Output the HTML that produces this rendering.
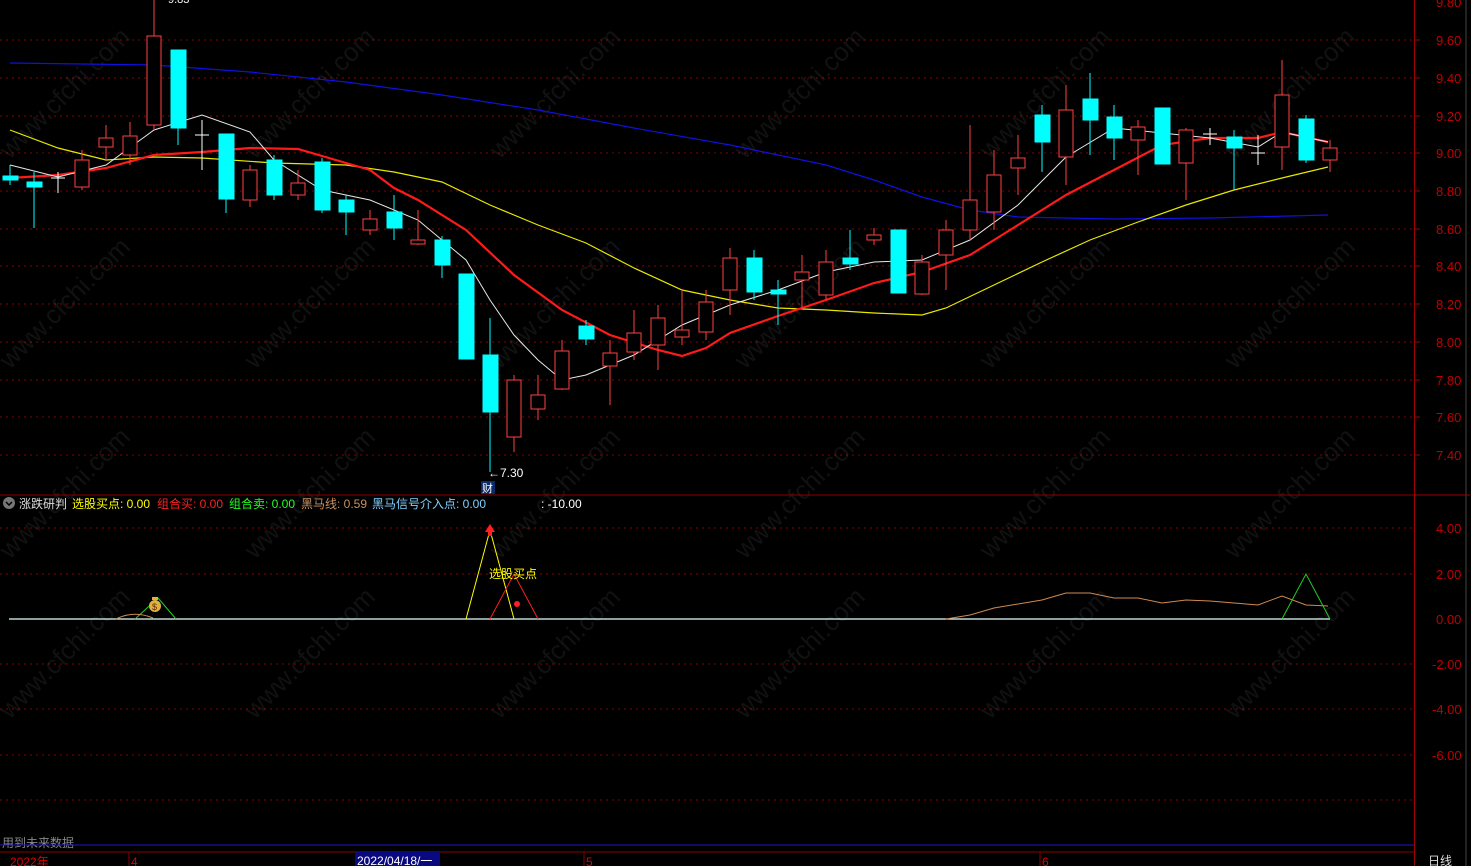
<!DOCTYPE html>
<html><head><meta charset="utf-8"><style>
html,body{margin:0;padding:0;background:#000;width:1471px;height:866px;overflow:hidden}
svg{display:block}
text{font-family:"Liberation Sans","Noto Sans CJK SC",sans-serif}
</style></head><body>
<svg width="1471" height="866" viewBox="0 0 1471 866" xmlns="http://www.w3.org/2000/svg">
<rect width="1471" height="866" fill="#000"/>
<g stroke="#8a0000" stroke-width="1" stroke-dasharray="2,4">
<line x1="0" x2="1414" y1="40" y2="40"/><line x1="0" x2="1414" y1="78" y2="78"/><line x1="0" x2="1414" y1="116" y2="116"/><line x1="0" x2="1414" y1="153" y2="153"/><line x1="0" x2="1414" y1="191" y2="191"/><line x1="0" x2="1414" y1="229" y2="229"/><line x1="0" x2="1414" y1="266" y2="266"/><line x1="0" x2="1414" y1="304" y2="304"/><line x1="0" x2="1414" y1="342" y2="342"/><line x1="0" x2="1414" y1="380" y2="380"/><line x1="0" x2="1414" y1="417" y2="417"/><line x1="0" x2="1414" y1="455" y2="455"/>
<line x1="0" x2="1414" y1="528" y2="528"/><line x1="0" x2="1414" y1="574" y2="574"/><line x1="0" x2="1414" y1="664" y2="664"/><line x1="0" x2="1414" y1="709" y2="709"/><line x1="0" x2="1414" y1="755" y2="755"/><line x1="0" x2="1414" y1="800" y2="800"/>
</g>
<g fill="#7a7a7a" opacity="0.14" font-size="26">
<text transform="translate(10,160) rotate(-45)">www.cfchi.com</text>
<text transform="translate(255,160) rotate(-45)">www.cfchi.com</text>
<text transform="translate(500,160) rotate(-45)">www.cfchi.com</text>
<text transform="translate(745,160) rotate(-45)">www.cfchi.com</text>
<text transform="translate(990,160) rotate(-45)">www.cfchi.com</text>
<text transform="translate(1235,160) rotate(-45)">www.cfchi.com</text>
<text transform="translate(10,370) rotate(-45)">www.cfchi.com</text>
<text transform="translate(255,370) rotate(-45)">www.cfchi.com</text>
<text transform="translate(500,370) rotate(-45)">www.cfchi.com</text>
<text transform="translate(745,370) rotate(-45)">www.cfchi.com</text>
<text transform="translate(990,370) rotate(-45)">www.cfchi.com</text>
<text transform="translate(1235,370) rotate(-45)">www.cfchi.com</text>
<text transform="translate(10,560) rotate(-45)">www.cfchi.com</text>
<text transform="translate(255,560) rotate(-45)">www.cfchi.com</text>
<text transform="translate(500,560) rotate(-45)">www.cfchi.com</text>
<text transform="translate(745,560) rotate(-45)">www.cfchi.com</text>
<text transform="translate(990,560) rotate(-45)">www.cfchi.com</text>
<text transform="translate(1235,560) rotate(-45)">www.cfchi.com</text>
<text transform="translate(10,720) rotate(-45)">www.cfchi.com</text>
<text transform="translate(255,720) rotate(-45)">www.cfchi.com</text>
<text transform="translate(500,720) rotate(-45)">www.cfchi.com</text>
<text transform="translate(745,720) rotate(-45)">www.cfchi.com</text>
<text transform="translate(990,720) rotate(-45)">www.cfchi.com</text>
<text transform="translate(1235,720) rotate(-45)">www.cfchi.com</text>
</g>
<polyline fill="none" stroke="#1010e0" stroke-width="1.2" points="10,63 154,65 250,72 346,82 442,95 538,110 634,128 730,145 826,165 874,180 922,197 970,210 1018,217 1114,219 1210,218 1328,215"/>
<polyline fill="none" stroke="#e8e800" stroke-width="1.2" points="10,130 58,148 106,160 154,157 202,158 274,163 346,165 394,172 442,182 490,205 538,225 586,243 634,268 682,290 730,300 778,308 826,310 874,313 922,315 946,308 994,285 1042,262 1090,240 1138,222 1186,205 1234,190 1282,178 1328,167"/>
<polyline fill="none" stroke="#ff1a1a" stroke-width="2.2" points="10,178 58,175 106,168 154,155 202,152 250,148 298,149 346,163 370,170 394,188 418,200 466,230 514,275 562,310 610,335 658,350 682,356 706,348 730,333 778,316 826,300 874,283 922,272 970,255 1018,225 1066,195 1114,170 1162,145 1210,138 1258,138 1282,132 1328,142"/>
<polyline fill="none" stroke="#e8e8e8" stroke-width="1" points="10,165 58,177 106,165 154,130 202,115 250,132 274,160 322,190 370,200 418,220 466,260 490,300 514,335 538,360 562,380 586,375 634,355 682,325 730,305 778,290 826,272 874,262 922,260 970,240 1018,205 1066,157 1114,128 1162,133 1210,138 1258,147 1282,132 1328,142"/>
<g stroke-width="1">
<g stroke="#00ffff" fill="#00ffff">
<line x1="10" x2="10" y1="165" y2="185"/><rect x="3" y="176" width="15" height="4"/>
<line x1="34" x2="34" y1="172" y2="228"/><rect x="27" y="182" width="15" height="5"/>
<line x1="178" x2="178" y1="128" y2="145"/><rect x="171" y="50" width="15" height="78"/>
<line x1="226" x2="226" y1="134" y2="213"/><rect x="219" y="134" width="15" height="65"/>
<line x1="274" x2="274" y1="155" y2="200"/><rect x="267" y="160" width="15" height="35"/>
<line x1="322" x2="322" y1="158" y2="213"/><rect x="315" y="162" width="15" height="48"/>
<line x1="346" x2="346" y1="195" y2="235"/><rect x="339" y="200" width="15" height="12"/>
<line x1="394" x2="394" y1="195" y2="240"/><rect x="387" y="212" width="15" height="16"/>
<line x1="442" x2="442" y1="236" y2="278"/><rect x="435" y="240" width="15" height="25"/>
<rect x="459" y="274" width="15" height="85"/>
<line x1="490" x2="490" y1="318" y2="472"/><rect x="483" y="355" width="15" height="57"/>
<line x1="586" x2="586" y1="320" y2="345"/><rect x="579" y="326" width="15" height="13"/>
<line x1="754" x2="754" y1="250" y2="300"/><rect x="747" y="258" width="15" height="34"/>
<line x1="778" x2="778" y1="280" y2="325"/><rect x="771" y="290" width="15" height="4"/>
<line x1="850" x2="850" y1="230" y2="270"/><rect x="843" y="258" width="15" height="6"/>
<rect x="891" y="230" width="15" height="63"/>
<line x1="1042" x2="1042" y1="105" y2="172"/><rect x="1035" y="115" width="15" height="27"/>
<line x1="1090" x2="1090" y1="73" y2="155"/><rect x="1083" y="99" width="15" height="21"/>
<line x1="1114" x2="1114" y1="105" y2="160"/><rect x="1107" y="117" width="15" height="21"/>
<rect x="1155" y="108" width="15" height="56"/>
<line x1="1234" x2="1234" y1="130" y2="190"/><rect x="1227" y="137" width="15" height="11"/>
<line x1="1306" x2="1306" y1="115" y2="163"/><rect x="1299" y="119" width="15" height="41"/>
</g>
<g stroke="#ff4040" fill="#000">
<line x1="82" x2="82" y1="150" y2="190"/><rect x="75" y="160" width="14" height="27"/>
<line x1="106" x2="106" y1="125" y2="160"/><rect x="99" y="138" width="14" height="9"/>
<line x1="130" x2="130" y1="122" y2="165"/><rect x="123" y="136" width="14" height="19"/>
<line x1="154" x2="154" y1="0" y2="130"/><rect x="147" y="36" width="14" height="89"/>
<line x1="250" x2="250" y1="165" y2="207"/><rect x="243" y="170" width="14" height="30"/>
<line x1="298" x2="298" y1="170" y2="200"/><rect x="291" y="183" width="14" height="12"/>
<line x1="370" x2="370" y1="210" y2="235"/><rect x="363" y="219" width="14" height="11"/>
<line x1="418" x2="418" y1="210" y2="245"/><rect x="411" y="240" width="14" height="4"/>
<line x1="514" x2="514" y1="375" y2="452"/><rect x="507" y="380" width="14" height="57"/>
<line x1="538" x2="538" y1="375" y2="420"/><rect x="531" y="395" width="14" height="14"/>
<line x1="562" x2="562" y1="340" y2="390"/><rect x="555" y="351" width="14" height="38"/>
<line x1="610" x2="610" y1="340" y2="405"/><rect x="603" y="353" width="14" height="13"/>
<line x1="634" x2="634" y1="310" y2="360"/><rect x="627" y="333" width="14" height="19"/>
<line x1="658" x2="658" y1="305" y2="370"/><rect x="651" y="318" width="14" height="27"/>
<line x1="682" x2="682" y1="290" y2="345"/><rect x="675" y="330" width="14" height="7"/>
<line x1="706" x2="706" y1="290" y2="340"/><rect x="699" y="302" width="14" height="30"/>
<line x1="730" x2="730" y1="248" y2="315"/><rect x="723" y="258" width="14" height="32"/>
<line x1="802" x2="802" y1="255" y2="310"/><rect x="795" y="272" width="14" height="8"/>
<line x1="826" x2="826" y1="250" y2="300"/><rect x="819" y="262" width="14" height="33"/>
<line x1="874" x2="874" y1="228" y2="245"/><rect x="867" y="235" width="14" height="5"/>
<line x1="922" x2="922" y1="255" y2="295"/><rect x="915" y="262" width="14" height="32"/>
<line x1="946" x2="946" y1="220" y2="290"/><rect x="939" y="230" width="14" height="25"/>
<line x1="970" x2="970" y1="125" y2="240"/><rect x="963" y="200" width="14" height="30"/>
<line x1="994" x2="994" y1="150" y2="230"/><rect x="987" y="175" width="14" height="37"/>
<line x1="1018" x2="1018" y1="135" y2="195"/><rect x="1011" y="158" width="14" height="10"/>
<line x1="1066" x2="1066" y1="85" y2="185"/><rect x="1059" y="110" width="14" height="47"/>
<line x1="1138" x2="1138" y1="120" y2="175"/><rect x="1131" y="127" width="14" height="13"/>
<line x1="1186" x2="1186" y1="128" y2="200"/><rect x="1179" y="130" width="14" height="33"/>
<line x1="1282" x2="1282" y1="60" y2="170"/><rect x="1275" y="95" width="14" height="52"/>
<line x1="1330" x2="1330" y1="140" y2="172"/><rect x="1323" y="148" width="14" height="12"/>
</g>
<g stroke="#fff">
<line x1="51" x2="65" y1="178" y2="178"/><line x1="58" x2="58" y1="172" y2="193"/>
<line x1="195" x2="209" y1="135" y2="135"/><line x1="202" x2="202" y1="120" y2="170"/>
<line x1="1203" x2="1217" y1="134" y2="134"/><line x1="1210" x2="1210" y1="128" y2="145"/>
<line x1="1251" x2="1265" y1="153" y2="153"/><line x1="1258" x2="1258" y1="135" y2="165"/>
</g>
</g>
<text x="168" y="3" fill="#fff" font-size="11">9.83</text>
<text x="488" y="477" fill="#fff" font-size="12">←7.30</text>
<rect x="481" y="481" width="14" height="13" fill="#0a2a6a"/><text x="482" y="492" fill="#fff" font-size="11">财</text>
<line x1="0" x2="1414" y1="495" y2="495" stroke="#8a0000"/>
<circle cx="9" cy="503" r="6" fill="#777"/><path d="M6 502 L9 505 L12 502" stroke="#000" fill="none" stroke-width="1.5"/>
<text y="508" font-size="12"><tspan x="19" fill="#ddd">涨跌研判</tspan><tspan x="72" fill="#ffff00">选股买点: 0.00</tspan><tspan x="157" fill="#ff2020">组合买: 0.00</tspan><tspan x="229" fill="#20ff20">组合卖: 0.00</tspan><tspan x="301" fill="#c89060">黑马线: 0.59</tspan><tspan x="372" fill="#80d0ff">黑马信号介入点: 0.00</tspan><tspan x="541" fill="#fff">: -10.00</tspan></text>
<line x1="9" x2="1330" y1="619" y2="619" stroke="#e0ffff" stroke-width="1.2"/>
<polyline fill="none" stroke="#d08a50" points="946,619 970,615 994,608 1042,600 1066,593 1090,593 1114,598 1138,598 1162,603 1186,600 1210,601 1234,603 1258,605 1282,596 1306,605 1328,606"/>
<polyline fill="none" stroke="#20d020" points="1282,619 1306,574 1330,619"/>
<polyline fill="none" stroke="#ffff00" points="466,619 490,530 514,619"/>
<polyline fill="none" stroke="#ff2020" points="490,619 514,574 538,619"/>
<path d="M490,524 L495,532 L492,532 L492,536 L488,536 L488,532 L485,532 Z" fill="#ff2020"/>
<circle cx="517" cy="604" r="3" fill="#ff2020"/>
<text x="489" y="578" fill="#ffff00" font-size="12">选股买点</text>
<polyline fill="none" stroke="#20d020" points="135,619 158,598 176,619"/>
<path d="M116,619 Q134,610 153,618" fill="none" stroke="#d08a50"/>
<circle cx="155" cy="606" r="6" fill="#e0b040"/><rect x="152" y="597" width="6" height="3" fill="#e0b040"/><text x="152" y="610" font-size="9" fill="#5a3000">$</text>
<text x="2" y="847" fill="#888" font-size="12">用到未来数据</text>
<line x1="0" x2="1414" y1="845" y2="845" stroke="#1a1acc"/>
<line x1="0" x2="1414" y1="852" y2="852" stroke="#8a0000"/>
<text x="10" y="866" fill="#e00000" font-size="12">2022年</text>
<line x1="129" x2="129" y1="852" y2="866" stroke="#8a0000"/><text x="131" y="866" fill="#e00000" font-size="12">4</text>
<rect x="355" y="852" width="85" height="14" fill="#0a0a80"/><text x="357" y="865" fill="#fff" font-size="12">2022/04/18/一</text>
<line x1="584" x2="584" y1="852" y2="866" stroke="#8a0000"/><text x="586" y="866" fill="#e00000" font-size="12">5</text>
<line x1="1040" x2="1040" y1="852" y2="866" stroke="#8a0000"/><text x="1042" y="866" fill="#e00000" font-size="12">6</text>
<line x1="1414.5" x2="1414.5" y1="0" y2="866" stroke="#a00000"/>
<line x1="1466" x2="1466" y1="0" y2="866" stroke="#444"/>
<g stroke="#a00000"><line x1="1414" x2="1420" y1="40" y2="40"/><line x1="1414" x2="1420" y1="78" y2="78"/><line x1="1414" x2="1420" y1="116" y2="116"/><line x1="1414" x2="1420" y1="153" y2="153"/><line x1="1414" x2="1420" y1="191" y2="191"/><line x1="1414" x2="1420" y1="229" y2="229"/><line x1="1414" x2="1420" y1="266" y2="266"/><line x1="1414" x2="1420" y1="304" y2="304"/><line x1="1414" x2="1420" y1="342" y2="342"/><line x1="1414" x2="1420" y1="380" y2="380"/><line x1="1414" x2="1420" y1="417" y2="417"/><line x1="1414" x2="1420" y1="455" y2="455"/><line x1="1414" x2="1470" y1="495" y2="495"/></g>
<g fill="#c00000" font-size="13">
<text x="1436" y="7">9.80</text><text x="1436" y="45">9.60</text><text x="1436" y="83">9.40</text><text x="1436" y="121">9.20</text><text x="1436" y="158">9.00</text><text x="1436" y="196">8.80</text><text x="1436" y="234">8.60</text><text x="1436" y="271">8.40</text><text x="1436" y="309">8.20</text><text x="1436" y="347">8.00</text><text x="1436" y="385">7.80</text><text x="1436" y="422">7.60</text><text x="1436" y="460">7.40</text>
<text x="1436" y="533">4.00</text><text x="1436" y="579">2.00</text><text x="1436" y="624">0.00</text><text x="1432" y="669">-2.00</text><text x="1432" y="714">-4.00</text><text x="1432" y="760">-6.00</text>
</g>
<text x="1428" y="865" fill="#ddd" font-size="12">日线</text>
</svg>
</body></html>
